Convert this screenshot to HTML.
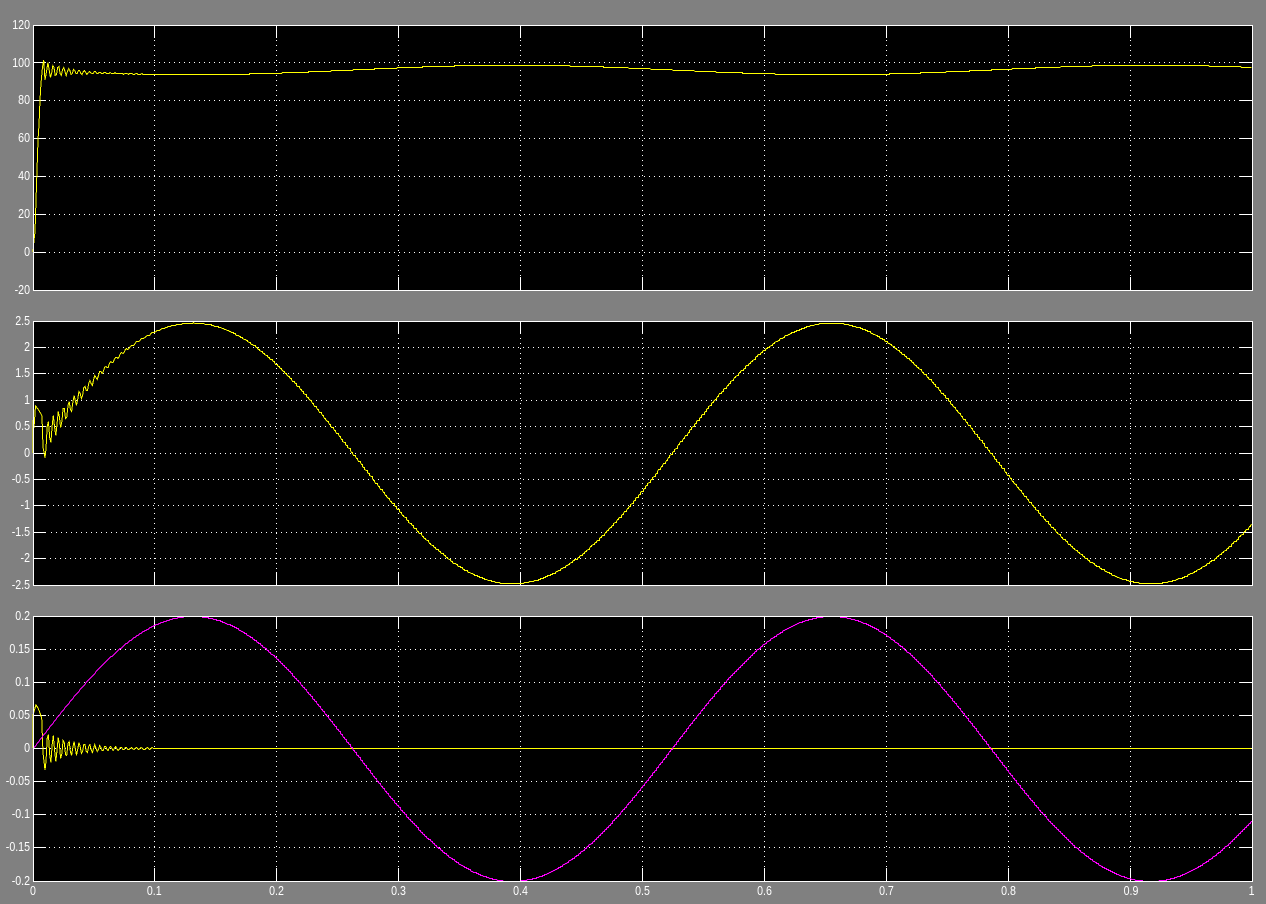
<!DOCTYPE html>
<html><head><meta charset="utf-8"><style>
html,body{margin:0;padding:0;background:#808080;width:1266px;height:904px;overflow:hidden}
svg{display:block;position:absolute;left:0;top:0}
text{font-family:"Liberation Sans",sans-serif;font-size:12.5px;fill:#fff}
.y{text-anchor:end}.x{text-anchor:middle}
</style></head><body>
<svg id="s" width="1266" height="904" viewBox="0 0 1266 904" xmlns="http://www.w3.org/2000/svg">
<rect x="33" y="25" width="1220" height="266" fill="#000"/>
<rect x="33" y="321" width="1220" height="265" fill="#000"/>
<rect x="33" y="616" width="1220" height="266" fill="#000"/>
<g id="grid" shape-rendering="crispEdges"></g>
<g id="curves" fill="none" shape-rendering="crispEdges"></g>
<g id="frames" fill="none" stroke="#fff" shape-rendering="crispEdges">
<rect x="33.5" y="25.5" width="1219" height="265"/>
<rect x="33.5" y="321.5" width="1219" height="264"/>
<rect x="33.5" y="616.5" width="1219" height="265"/>
</g>
<g class="labels" transform="scale(.85,1)">
<text class="y" x="35.3" y="29">120</text><text class="y" x="35.3" y="67">100</text><text class="y" x="35.3" y="104">80</text><text class="y" x="35.3" y="142">60</text><text class="y" x="35.3" y="180">40</text><text class="y" x="35.3" y="218">20</text><text class="y" x="35.3" y="256">0</text><text class="y" x="35.3" y="294">-20</text>
<text class="y" x="35.3" y="325">2.5</text><text class="y" x="35.3" y="351">2</text><text class="y" x="35.3" y="377">1.5</text><text class="y" x="35.3" y="404">1</text><text class="y" x="35.3" y="430">0.5</text><text class="y" x="35.3" y="457">0</text><text class="y" x="35.3" y="483">-0.5</text><text class="y" x="35.3" y="509">-1</text><text class="y" x="35.3" y="536">-1.5</text><text class="y" x="35.3" y="562">-2</text><text class="y" x="35.3" y="589">-2.5</text>
<text class="y" x="35.3" y="620">0.2</text><text class="y" x="35.3" y="653">0.15</text><text class="y" x="35.3" y="686">0.1</text><text class="y" x="35.3" y="719">0.05</text><text class="y" x="35.3" y="752">0</text><text class="y" x="35.3" y="785">-0.05</text><text class="y" x="35.3" y="818">-0.1</text><text class="y" x="35.3" y="851">-0.15</text><text class="y" x="35.3" y="885">-0.2</text>
<text class="x" x="38.8" y="895">0</text><text class="x" x="181.5" y="895">0.1</text><text class="x" x="325.3" y="895">0.2</text><text class="x" x="468.8" y="895">0.3</text><text class="x" x="612.4" y="895">0.4</text><text class="x" x="755.9" y="895">0.5</text><text class="x" x="899.4" y="895">0.6</text><text class="x" x="1042.9" y="895">0.7</text><text class="x" x="1186.5" y="895">0.8</text><text class="x" x="1330.6" y="895">0.9</text><text class="x" x="1472.4" y="895">1</text>
</g>
</svg>
<script>
(function(){
var NS="http://www.w3.org/2000/svg";
function el(g,n,a){var e=document.createElementNS(NS,n);for(var k in a)e.setAttribute(k,a[k]);g.appendChild(e);return e}
var grid=document.getElementById("grid"),cur=document.getElementById("curves");
var xs=[154,276,398,520,642,764,886,1008,1130];
var panels=[
 {t:25,b:290,v:40,ys:[[62,49],[100,49],[138,49],[176,49],[214,49],[252,49]]},
 {t:321,b:585,v:338,ys:[[347,48],[373,48],[400,51],[426,50],[453,50],[479,48],[505,48],[532,51],[558,50]]},
 {t:616,b:881,v:631,ys:[[649,50],[682,49],[715,48],[748,50],[781,51],[814,50],[847,49]]}
];
function ln(x1,y1,x2,y2,d){var a={x1:x1,y1:y1,x2:x2,y2:y2,stroke:"#fff","stroke-width":1};if(d)a["stroke-dasharray"]=d;el(grid,"line",a)}
panels.forEach(function(p){
 p.ys.forEach(function(r){
  var y=r[0];
  ln(r[1],y+.5,1238,y+.5,"1 4");
  ln(33,y+.5,46,y+.5);ln(1239,y+.5,1252,y+.5);
 });
 xs.forEach(function(x){
  ln(x+.5,p.v,x+.5,p.b-14,"1 4");
  ln(x+.5,p.t,x+.5,p.t+13);ln(x+.5,p.b-13,x+.5,p.b);
 });
});
function T(x){return (x-33)/1219}
function osc(x,a,d){
 var m=a*Math.exp(-(x-46)/d), tail=x<200?0.7*(1-(x-46)/154):0;
 return Math.max(m,tail)*Math.cos(2*Math.PI*(x-48)/5.2);
}
function pts(head,start,step,f,end){
 var s=head.map(function(p){return p[0]+","+p[1]});
 var py=null,i=0;
 for(var x=start;x<=end;x+=step){
  var X,Y;
  if(x<200){X=x.toFixed(1);Y=Math.round(f(x))+.5;s.push(X+","+Y);}
  else{
   X=Math.round(x)+.5;Y=Math.round(f(x))+.5;
   if(i%2==0&&py!==null)s.push(X+","+py);
   s.push(X+","+Y);i++;
  }
  py=Y;
 }
 return s.join(" ");
}
function pl(c,p){el(cur,"polyline",{points:p,stroke:c,"stroke-width":1})}
/* panel 1 */
pl("#ff0",pts([[33,252],[34,240],[35,232],[36,200],[37,170],[38,140],[39,125],[40,100],[41,83],[42.5,67],[43.7,60],[45,80]],46.7,1.22,function(x){
 var b=251.4-1.895*(96-2.5*Math.sin(12*T(x)));
 return b-(x<200?osc(x,8.5,25):0);
},1252));
/* panel 2 */
pl("#ff0",pts([[33,453],[33,420],[34,428],[35.5,406],[38,409],[41,414],[42,416],[43,447],[45,458]],46,1.22,function(x){
 var b=453-130.4*Math.sin(12*T(x));
 return b-(x<200?osc(x,15,32):0);
},1252));
/* panel 3 yellow */
pl("#ff0",pts([[33,748],[33,715],[35,708],[36,705],[38,708],[40,713],[41.7,718],[43,753],[45,770]],46,1.22,function(x){
 return 748-(x<154?osc(x,17,32):0);
},1252));
/* panel 3 magenta */
pl("#f0f",pts([],33,1,function(x){return 748.5-132.5*Math.sin(12*T(x))},1252));
})();
</script>
</body></html>
